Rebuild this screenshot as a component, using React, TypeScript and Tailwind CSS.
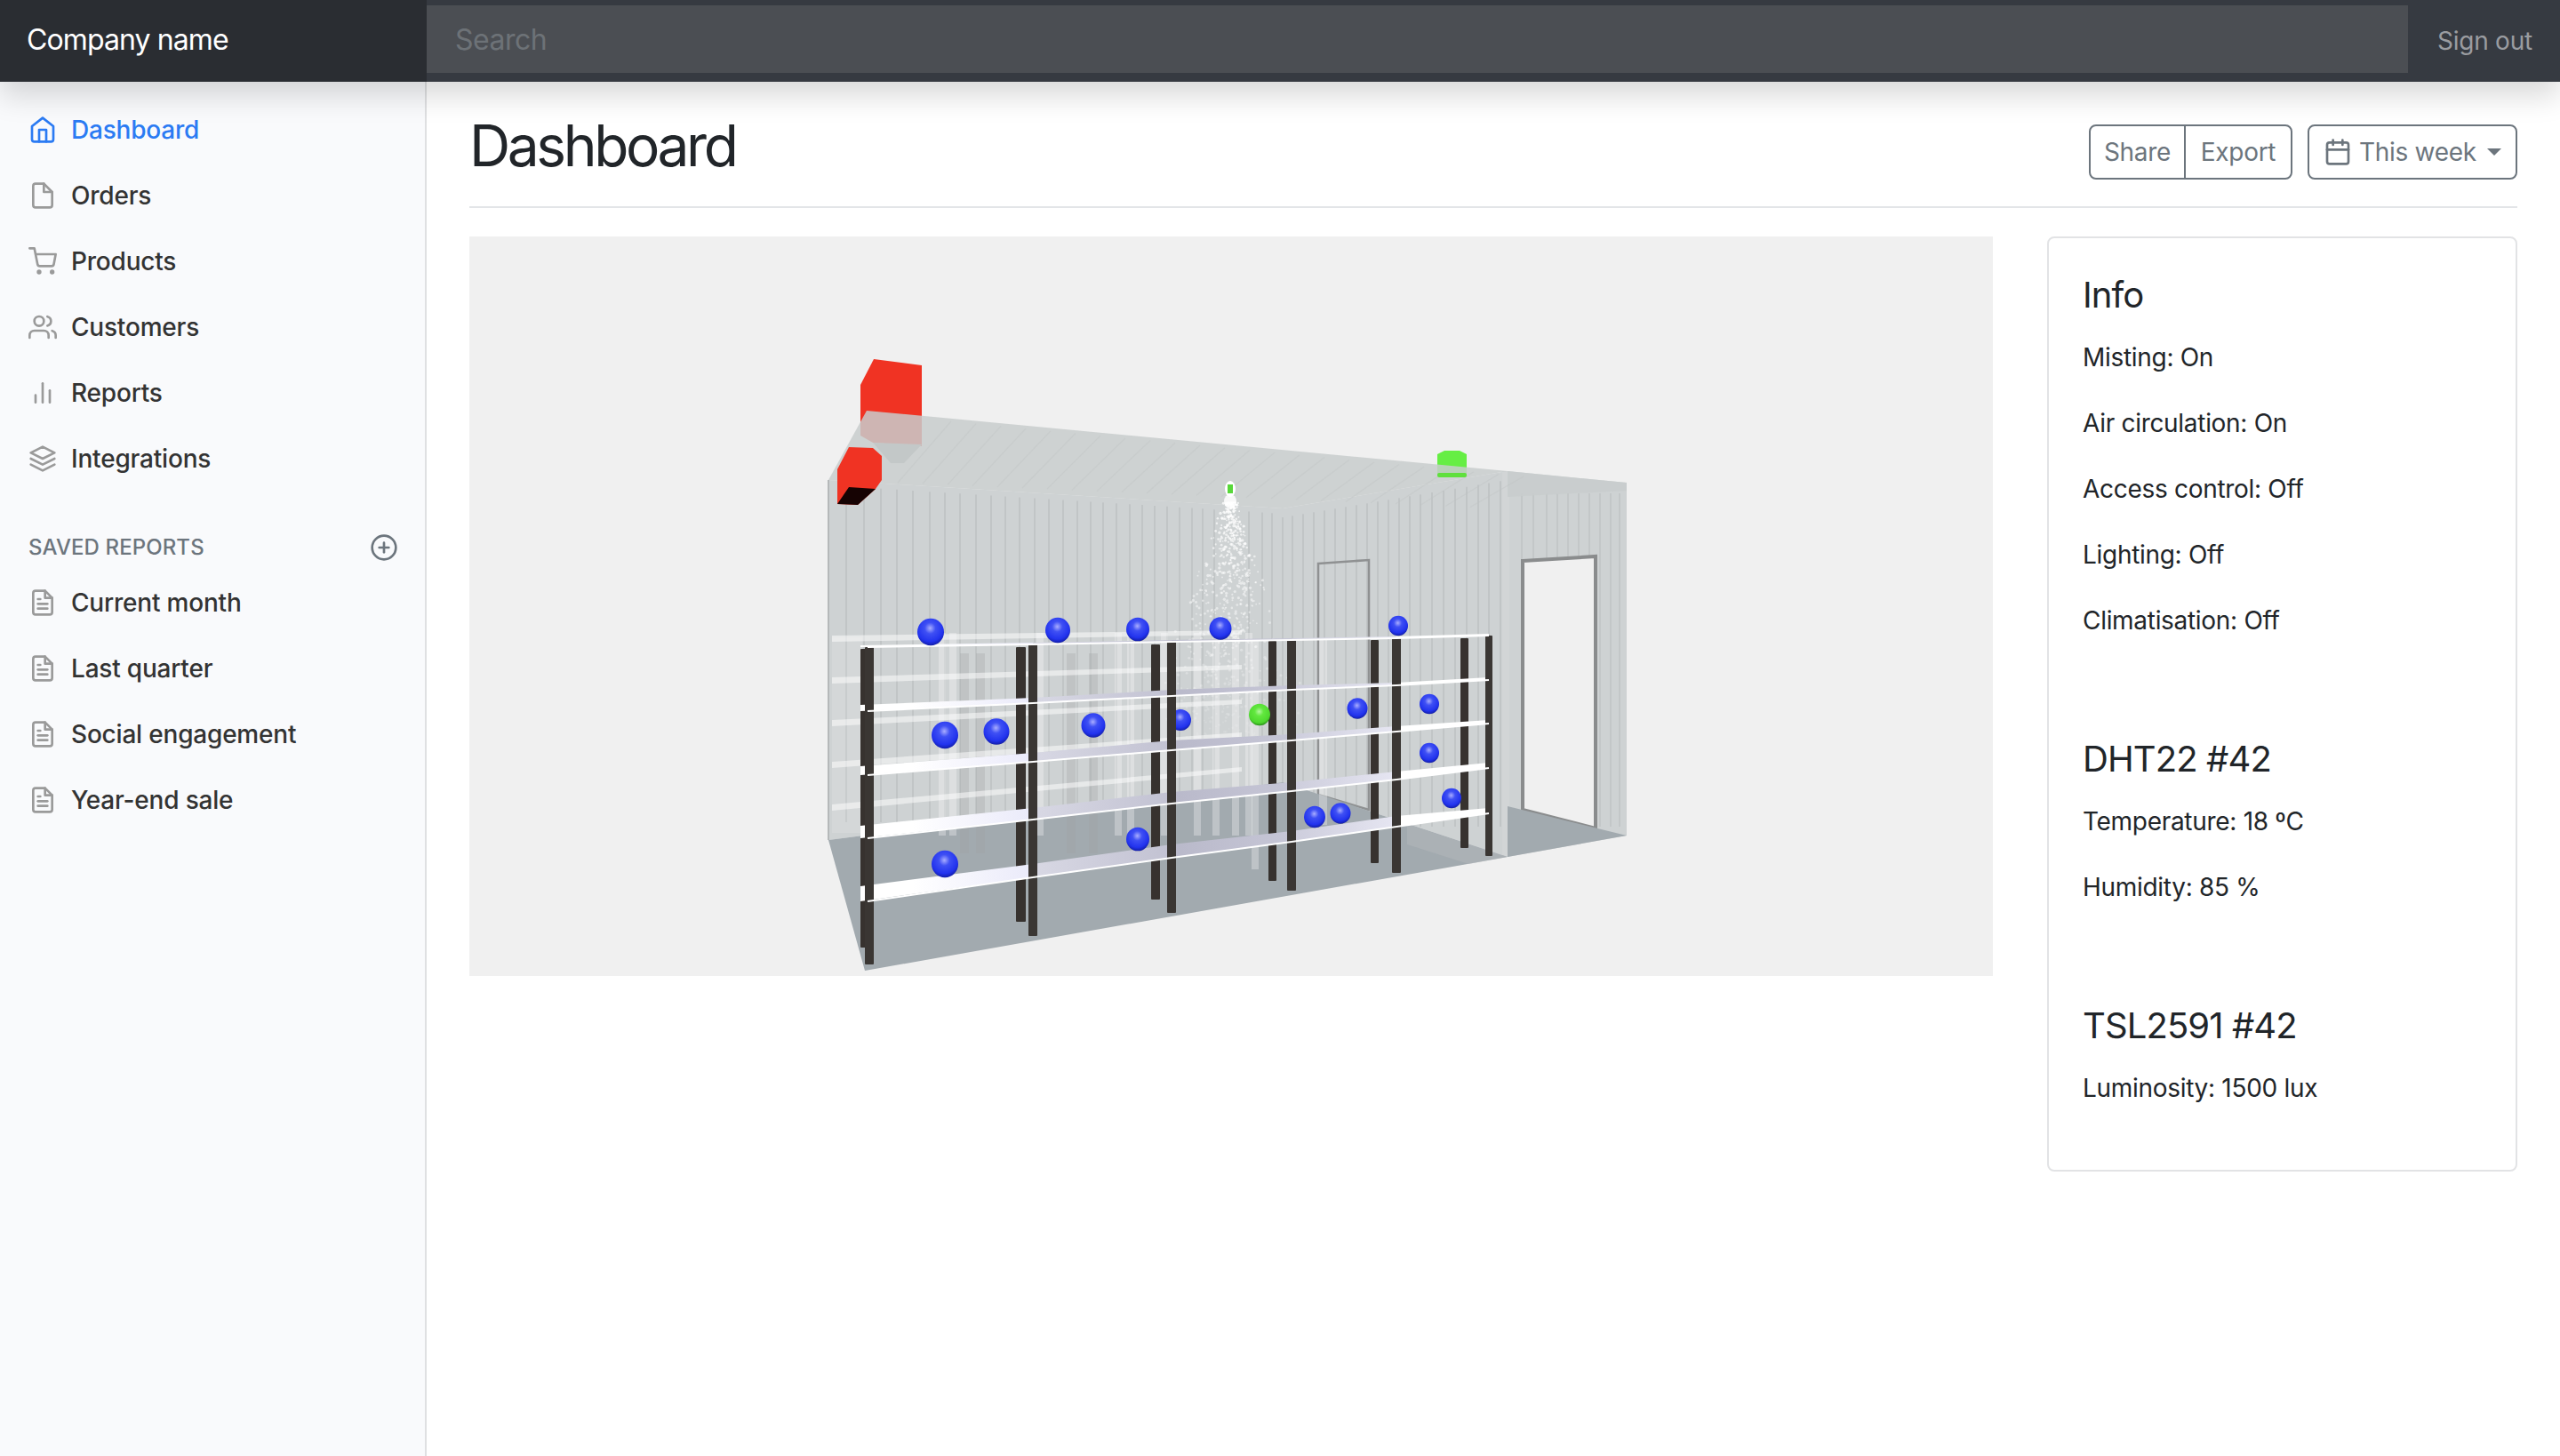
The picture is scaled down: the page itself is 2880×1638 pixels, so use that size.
import React from "react";
import { FiHome, FiFile, FiShoppingCart, FiUsers, FiBarChart2, FiLayers, FiPlusCircle, FiFileText, FiCalendar } from "react-icons/fi";

const mainNav = [
  { label: "Dashboard", Icon: FiHome, active: true },
  { label: "Orders", Icon: FiFile },
  { label: "Products", Icon: FiShoppingCart },
  { label: "Customers", Icon: FiUsers },
  { label: "Reports", Icon: FiBarChart2 },
  { label: "Integrations", Icon: FiLayers },
];
const saved = ["Current month", "Last quarter", "Social engagement", "Year-end sale"];

function NavRow({ label, Icon, active }: { label: string; Icon: React.ComponentType<{ size?: number; className?: string }>; active?: boolean }) {
  return (
    <a className={`flex items-center h-[74px] pl-[32px] text-[28px] leading-[42px] font-medium tracking-[-0.2px] ${active ? "text-[#2b7bf3]" : "text-[#333333]"}`}>
      <Icon size={32} className={`mr-[16px] shrink-0 ${active ? "text-[#2b7bf3]" : "text-[#9a9a9a]"}`} />
      {label}
    </a>
  );
}

const posts = [976, 1162, 1318, 1453, 1571, 1675];
const front = [
  [728, 800, 872, 943, 1014],
  [725, 791, 857, 922, 987],
  [722, 783, 844, 904, 965],
  [720, 776, 833, 890, 947],
  [718, 771, 823, 877, 930],
  [715, 765, 814, 864, 915],
];
const thick = [
  [2, 7, 10, 14, 17],
  [2, 6, 10, 13, 15],
  [2, 7, 11, 13, 15],
  [2, 5, 7, 10, 12],
  [2, 3, 6, 9, 12],
  [2, 3, 4, 6, 6],
];
const frontPosts = [
  [973, 983, 728, 1085],
  [1157, 1167, 725, 1053],
  [1313, 1323, 722, 1027],
  [1448, 1458, 720, 1002],
  [1566, 1576, 718, 982],
  [1671, 1679, 715, 963],
];
const backPosts = [
  [968, 974, 730, 1066],
  [1143, 1154, 728, 1037],
  [1295, 1305, 725, 1012],
  [1427, 1436, 721, 991],
  [1542, 1551, 720, 971],
  [1643, 1652, 718, 954],
];
const spheres: [number, number, number, string?][] = [
  [1047, 711, 15], [1190, 709, 14], [1280, 708, 13], [1373, 707, 12.5], [1573, 704, 11],
  [1063, 827, 15], [1121, 823, 14.5], [1230, 816, 13.5],
  [1417, 804, 12, "g"], [1527, 797, 11.5], [1608, 792, 11], [1608, 847, 11], [1633, 898, 11],
  [1508, 915, 11.5], [1479, 919, 12], [1280, 944, 13], [1063, 972, 15],
];
const wallLines = [952, 972, 991, 1009, 1027, 1046, 1063, 1080, 1098, 1115, 1131, 1147, 1164, 1180, 1196, 1212, 1227, 1241, 1256, 1271, 1285, 1299, 1313, 1327, 1341, 1353, 1366, 1405, 1420, 1431, 1443, 1454, 1466, 1478, 1490, 1502, 1514, 1526, 1538, 1550, 1562, 1574, 1586, 1598, 1611, 1624, 1637, 1650, 1663, 1675, 1688];
const farLines = [1712, 1725, 1740, 1752, 1764, 1776, 1788, 1800, 1812, 1822];
const ghostH = [
  [936, 715, 1397, 709], [936, 762, 1397, 748], [936, 810, 1397, 787], [936, 857, 1397, 824], [936, 905, 1397, 863],
];
const ghostLight = [1060, 1072, 1170, 1258, 1272, 1310, 1347, 1368, 1390, 1405];
const ghostDark = [1085, 1103, 1205, 1230];

function mist() {
  let seed = 12345;
  const rnd = () => {
    seed = (seed * 1664525 + 1013904223) % 4294967296;
    return seed / 4294967296;
  };
  const dots = [];
  for (let i = 0; i < 760; i++) {
    const t = Math.pow(rnd(), 1.15);
    const y = 565 + t * 265;
    const spread = 10 + t * 95;
    const x = 1384 + (rnd() + rnd() - 1) * spread;
    dots.push(<circle key={i} cx={x} cy={y} r={0.8 + rnd() * 0.9} fill="#ffffff" opacity={0.75 - t * 0.65} />);
  }
  return dots;
}

function Scene() {
  return (
    <svg viewBox="528 266 1714 832" className="block w-full h-full">
      <defs>
        <radialGradient id="ball" cx="0.48" cy="0.36" r="0.68">
          <stop offset="0" stopColor="#a9adff" />
          <stop offset="0.3" stopColor="#3f50f4" />
          <stop offset="0.72" stopColor="#2233ee" />
          <stop offset="0.92" stopColor="#1420b0" />
          <stop offset="1" stopColor="#05052a" />
        </radialGradient>
        <radialGradient id="ballg" cx="0.48" cy="0.36" r="0.68">
          <stop offset="0" stopColor="#b4f6a0" />
          <stop offset="0.3" stopColor="#62e83f" />
          <stop offset="0.75" stopColor="#4fd82f" />
          <stop offset="0.92" stopColor="#2e9a1c" />
          <stop offset="1" stopColor="#0f3a08" />
        </radialGradient>
        <linearGradient id="bay0" x1="0" x2="1" y1="0" y2="0">
          <stop offset="0.3" stopColor="#ffffff" />
          <stop offset="1" stopColor="#eaeafa" />
        </linearGradient>
        <linearGradient id="bay1" x1="0" x2="1" y1="0" y2="0">
          <stop offset="0" stopColor="#d8d8e4" />
          <stop offset="1" stopColor="#c2c2d2" />
        </linearGradient>
        <linearGradient id="bay2" x1="0" x2="1" y1="0" y2="0">
          <stop offset="0" stopColor="#b9b9ca" />
          <stop offset="1" stopColor="#c6c6d6" />
        </linearGradient>
        <linearGradient id="bay3" x1="0" x2="1" y1="0" y2="0">
          <stop offset="0" stopColor="#cdcddc" />
          <stop offset="1" stopColor="#e6e6f2" />
        </linearGradient>
        <linearGradient id="bay4" x1="0" x2="1" y1="0" y2="0">
          <stop offset="0" stopColor="#ffffff" />
          <stop offset="1" stopColor="#ffffff" />
        </linearGradient>
      </defs>

      {/* objects behind the ceiling */}
      <polygon points="983,404 1037,411 1037,502 982,498 968,490 968,433" fill="#f03323" />
      <polygon points="982,498 1037,500 1017,521 1002,521" fill="#a8acac" />
      <polygon points="1617,511 1625,507 1642,507 1650,511 1650,535 1617,535" fill="#66ee44" />

      {/* back wall */}
      <polygon points="932,540 1443,572 1443,880 932,945" fill="#ced2d3" />
      <polygon points="1443,572 1696,530 1696,964 1443,880" fill="#ced2d3" />
      <polygon points="1696,530 1830,543 1830,940 1696,964" fill="#ced2d3" />
      {wallLines.map((x, i) => {
        const top = x < 1443 ? 540 + ((x - 932) / 511) * 32 + 6 : 572 - ((x - 1443) / 253) * 42 + 10;
        return <line key={i} x1={x} x2={x} y1={top} y2={x < 1443 ? 925 : 930} stroke="#b9bdbe" strokeWidth="1.2" />;
      })}
      {farLines.map((x, i) => (
        <line key={i} x1={x} x2={x} y1={555} y2={930} stroke="#bcc0c1" strokeWidth="1.2" />
      ))}
      <line x1="932" x2="932" y1="540" y2="945" stroke="#b5b8b9" strokeWidth="2" />
      <rect x="1690" y="530" width="8" height="434" fill="#d2d5d6" />

      {/* ceiling */}
      <polygon points="975,462 1696,530 1443,572 932,540" fill="#c8cccc" fillOpacity="0.85" />
      <polygon points="1696,530 1830,543 1830,552 1696,559" fill="#c8cccc" fillOpacity="0.85" />
      {Array.from({ length: 24 }).map((_, i) => {
        const a = 1010 + i * 28;
        return <line key={i} x1={a} y1={543 + i * 1.2} x2={a + 60} y2={474 + i * 2.7} stroke="#c0c4c4" strokeWidth="1.2" opacity="0.4" />;
      })}
      <rect x="1617" y="532" width="33" height="5" rx="2" fill="#5fe03c" />

      {/* doors */}
      <polygon points="1483,634 1540,630 1540,911 1483,894" fill="none" stroke="#8f9192" strokeWidth="2.5" />
      <polygon points="1713,631 1795,626 1795,932 1713,911" fill="#f0f0f0" stroke="#8a8c8d" strokeWidth="4" />

      {/* floor */}
      <polygon points="932,945 1443,880 1696,964 973,1092" fill="#a2aaaf" />
      <polygon points="1696,907 1830,940 1696,964" fill="#a2aaaf" />
      <polygon points="1583,927 1696,964 1652,972 1583,950" fill="#b3b8bb" opacity="0.5" />

      {/* ghost shelving behind */}
      {ghostDark.map((x, i) => (
        <rect key={i} x={x - 5} y={735} width={10} height={225} fill="#9ea2a3" opacity="0.3" />
      ))}
      {ghostLight.map((x, i) => (
        <rect key={i} x={x - 4} y={712} width={8} height={228} fill="#ffffff" opacity="0.3" />
      ))}
      <rect x="1484" y="720" width="9" height="208" fill="#ffffff" opacity="0.3" />
      <rect x="1408" y="720" width="8" height="258" fill="#ffffff" opacity="0.3" />
      {ghostH.map(([x1, y1, x2, y2], i) => (
        <polygon key={i} points={`${x1},${y1} ${x2},${y2} ${x2},${y2 + 5} ${x1},${y1 + 7}`} fill="#ffffff" opacity="0.5" />
      ))}
      <rect x="936" y="717" width="34" height="220" fill="#ffffff" opacity="0.12" />

      {/* mist */}
      {mist()}
      <ellipse cx="1384" cy="564" rx="7" ry="8" fill="#ffffff" opacity="0.85" />
      <ellipse cx="1384" cy="550" rx="6" ry="9" fill="#ffffff" />
      <rect x="1381" y="545" width="6" height="10" fill="#58d83a" />

      {/* front red box */}
      <polygon points="955,503 982,504 992,513 992,540 985,550 965,568 942,567 942,528" fill="#f03323" />
      <polygon points="955,548 985,550 965,568 942,567" fill="#160303" />

      {/* shelving */}
      {backPosts.map(([a, b, t, bot], i) => (
        <rect key={i} x={a} y={t} width={b - a} height={bot - t} rx="1" fill="#37322f" />
      ))}
      {[0, 1, 2, 3, 4].map((bay) => (
        <g key={bay}>
          {[0, 1, 2, 3, 4].map((lv) => {
            const x1 = bay === 0 ? 968 : posts[bay];
            const x2 = posts[bay + 1];
            const y1 = front[bay][lv];
            const y2 = front[bay + 1][lv];
            const t1 = thick[bay][lv];
            const t2 = thick[bay + 1][lv];
            return (
              <polygon
                key={lv}
                points={`${x1},${y1 - t1} ${x2},${y2 - t2} ${x2},${y2} ${x1},${y1}`}
                fill={`url(#bay${bay})`}
              />
            );
          })}
        </g>
      ))}
      <circle cx="1328" cy="810" r="12" fill="url(#ball)" />
      {frontPosts.map(([a, b, t, bot], i) => (
        <rect key={i} x={a} y={t} width={b - a} height={bot - t} rx="1" fill="#3a3633" />
      ))}
      {[0, 1, 2, 3, 4].map((bay) => (
        <g key={bay}>
          {[0, 1, 2, 3, 4].map((lv) => (
            <line
              key={lv}
              x1={posts[bay]}
              y1={front[bay][lv]}
              x2={posts[bay + 1]}
              y2={front[bay + 1][lv]}
              stroke="#ffffff"
              strokeWidth="2"
            />
          ))}
        </g>
      ))}
      {spheres.map(([x, y, r, g], i) => (
        <ellipse key={i} cx={x} cy={y} rx={r} ry={r * 1.02} fill={g ? "url(#ballg)" : "url(#ball)"} />
      ))}
    </svg>
  );
}

function Info({ children }: { children: React.ReactNode }) {
  return <p className="m-0 mb-[32px] text-[28px] leading-[42px] tracking-[-0.3px] text-[#212529]">{children}</p>;
}
function Head({ children, top }: { children: React.ReactNode; top?: boolean }) {
  return <h5 className={`mb-[25px] text-[40px] leading-[48px] font-normal tracking-[-0.9px] text-[#212529] ${top ? "" : "mt-[111px]"}`}>{children}</h5>;
}

export default function App() {
  return (
    <div className="flex flex-col w-[2880px] h-[1638px] bg-white [font-family:Inter,'Liberation_Sans',sans-serif] overflow-hidden">
      <header className="relative z-10 flex h-[92px] shrink-0 bg-[#363a41] shadow-[0_16px_32px_rgba(0,0,0,0.15)]">
        <div className="flex items-center w-[480px] h-full pl-[30px] pb-[2px] bg-[#2a2d32] text-white text-[32px] leading-[48px] tracking-[-0.9px]">Company name</div>
        <div className="pt-[6px] flex-1">
          <div className="flex items-center h-[76px] pl-[32px] pt-[1px] bg-[#4b4e53] text-[32px] tracking-[-0.5px] text-[#6d7277]">Search</div>
        </div>
        <div className="flex items-center w-[171px] pl-[33px] text-[28px] tracking-[-0.25px] text-[#9a9ca0]">Sign out</div>
      </header>

      <div className="flex flex-1 min-h-0">
        <aside className="w-[480px] shrink-0 bg-[#f9fafc] shadow-[inset_-2px_0_0_rgba(0,0,0,0.1)] pt-[17px]">
          {mainNav.map((n) => (
            <NavRow key={n.label} {...n} />
          ))}
          <div className="flex items-center justify-between h-[36px] mt-[45px] mb-[7px] pl-[32px] pr-[32px] text-[24px] font-medium tracking-[0.1px] text-[#6c757d]">
            <span>SAVED REPORTS</span>
            <FiPlusCircle size={32} />
          </div>
          {saved.map((s) => (
            <NavRow key={s} label={s} Icon={FiFileText} />
          ))}
        </aside>

        <main className="flex-1 px-[48px] pt-[48px]">
          <div className="flex items-start justify-between pb-[30px] mb-[32px] border-b-2 border-[#e3e5e8]">
            <h2 className="text-[64px] leading-[48px] font-normal tracking-[-3.4px] text-[#212529]">Dashboard</h2>
            <div className="flex text-[28px] leading-[42px] tracking-[-0.3px] text-[#6c757d]">
              <div className="flex h-[62px] mr-[17px] border-2 border-[#6c757d] rounded-[8px]">
                <span className="w-[107px] text-center py-[8px] border-r-2 border-[#6c757d]">Share</span>
                <span className="w-[118px] text-center py-[8px]">Export</span>
              </div>
              <div className="flex items-center h-[62px] w-[236px] px-[16px] border-2 border-[#6c757d] rounded-[8px]">
                <FiCalendar size={32} className="mr-[8px] shrink-0" />
                <span>This week</span>
                <span className="ml-auto w-0 h-0 border-t-[8px] border-x-[8px] border-t-[#6c757d] border-x-transparent" />
              </div>
            </div>
          </div>

          <div className="flex items-start justify-between">
            <div className="w-[1714px] h-[832px] bg-[#f0f0f0]">
              <Scene />
            </div>
            <section className="w-[529px] border-2 border-[#e2e3e5] rounded-[8px] pl-[38px] pr-[38px] pt-[40px] pb-[39px]">
              <Head top>Info</Head>
              <Info>Misting: On</Info>
              <Info>Air circulation: On</Info>
              <Info>Access control: Off</Info>
              <Info>Lighting: Off</Info>
              <Info>Climatisation: Off</Info>
              <Head>DHT22 #42</Head>
              <Info>Temperature: 18 ºC</Info>
              <Info>Humidity: 85 %</Info>
              <Head>TSL2591 #42</Head>
              <Info>Luminosity: 1500 lux</Info>
            </section>
          </div>
        </main>
      </div>
    </div>
  );
}
